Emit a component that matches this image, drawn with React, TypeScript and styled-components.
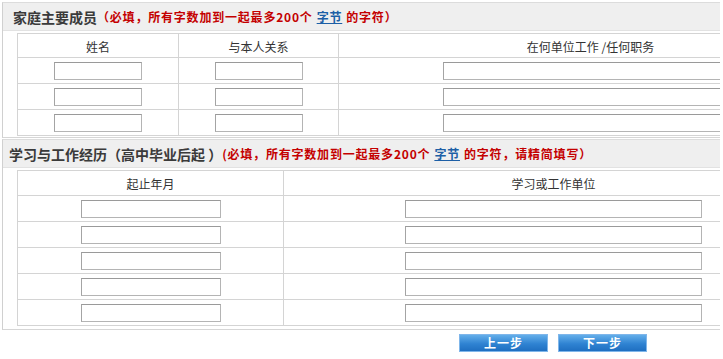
import styled, { createGlobalStyle } from 'styled-components';

const GlobalStyle = createGlobalStyle`
  html, body {
    margin: 0;
    padding: 0;
    background: #fff;
    overflow: hidden;
  }
  body {
    font-family: "Noto Sans CJK SC", "Noto Sans", "Liberation Sans", sans-serif;
    font-size: 12px;
    color: #333;
  }
`;

const Page = styled.div`
  width: 718px;
  margin-left: 2px;
  overflow: hidden;
`;

const Section = styled.div<{ $gap: number; $padBottom: number }>`
  border-top: 1px solid #dcdcdc;
  border-left: 1px solid #d0d0d0;
  border-bottom: 1px solid #d6d6d6;
  margin-top: ${(p) => p.$gap}px;
  padding-bottom: ${(p) => p.$padBottom}px;
`;

const SectionHeader = styled.div`
  height: 27px;
  background: #efefef;
  display: flex;
  align-items: center;
  padding-left: 6px;
  white-space: nowrap;
  border-bottom: 1px solid #e2e2e2;
`;

const Title = styled.span<{ $indent?: number }>`
  font-size: 14px;
  font-weight: bold;
  color: #3a3a3a;
  padding-left: ${(p) => p.$indent ?? 0}px;
`;

const Note = styled.span`
  font-size: 12px;
  font-weight: bold;
  letter-spacing: 0.8px;
  color: #c40000;
`;

const ByteLink = styled.a`
  color: #1d5fa6;
  text-decoration: underline;
  margin: 0 4px;
`;

const Content = styled.div`
  padding: 2px 0 0 14px;
`;

const Grid = styled.div<{ $width: number }>`
  width: ${(p) => p.$width}px;
  border-top: 1px solid #d4d4d4;
  border-left: 1px solid #d4d4d4;
`;

const Row = styled.div<{ $cols: string; $height: number }>`
  display: grid;
  grid-template-columns: ${(p) => p.$cols};
  height: ${(p) => p.$height}px;
`;

const Cell = styled.div`
  border-right: 1px solid #d4d4d4;
  border-bottom: 1px solid #d4d4d4;
  display: flex;
  align-items: center;
  justify-content: center;
  padding-top: 1px;
`;

const HeadCell = styled(Cell)`
  font-size: 12px;
  color: #333;
`;

const TextInput = styled.input<{ $width: number }>`
  box-sizing: border-box;
  width: ${(p) => p.$width}px;
  height: 18px;
  margin: 0;
  padding: 0 3px;
  border: 1px solid #b4b4b4;
  border-top-color: #9a9a9a;
  border-left-color: #a4a4a4;
  background: #fff;
  font-size: 12px;
  outline: none;
`;

const ButtonBar = styled.div`
  display: flex;
  gap: 10px;
  padding: 4px 0 0 457px;
`;

const StepButton = styled.button`
  width: 89px;
  height: 18px;
  padding: 0;
  border: 1px solid #7fb6ea;
  background: linear-gradient(#63aeea, #2f83d2 55%, #1f6fc1);
  color: #fff;
  font-family: inherit;
  font-size: 12px;
  font-weight: bold;
  letter-spacing: 1px;
  line-height: 16px;
  cursor: pointer;
`;

const familyCols = '161px 160px 504px';
const historyCols = '266px 540px';

export default function App() {
  return (
    <>
      <GlobalStyle />
      <Page>
        <Section $gap={2} $padBottom={1}>
          <SectionHeader>
            <Title $indent={4}>家庭主要成员</Title>
            <Note>
              （必填，所有字数加到一起最多200个
              <ByteLink href="#">字节</ByteLink>
              的字符）
            </Note>
          </SectionHeader>
          <Content>
            <Grid $width={826}>
              <Row $cols={familyCols} $height={24}>
                <HeadCell>姓名</HeadCell>
                <HeadCell>与本人关系</HeadCell>
                <HeadCell>在何单位工作 /任何职务</HeadCell>
              </Row>
              {[0, 1, 2].map((i) => (
                <Row key={i} $cols={familyCols} $height={26}>
                  <Cell>
                    <TextInput $width={88} />
                  </Cell>
                  <Cell>
                    <TextInput $width={88} />
                  </Cell>
                  <Cell>
                    <TextInput $width={295} />
                  </Cell>
                </Row>
              ))}
            </Grid>
          </Content>
        </Section>

        <Section $gap={1} $padBottom={3}>
          <SectionHeader>
            <Title>学习与工作经历（高中毕业后起 ）</Title>
            <Note>
              (必填，所有字数加到一起最多200个
              <ByteLink href="#">字节</ByteLink>
              的字符，请精简填写）
            </Note>
          </SectionHeader>
          <Content>
            <Grid $width={807}>
              <Row $cols={historyCols} $height={25}>
                <HeadCell>起止年月</HeadCell>
                <HeadCell>学习或工作单位</HeadCell>
              </Row>
              {[0, 1, 2, 3, 4].map((i) => (
                <Row key={i} $cols={historyCols} $height={26}>
                  <Cell>
                    <TextInput $width={140} />
                  </Cell>
                  <Cell>
                    <TextInput $width={297} />
                  </Cell>
                </Row>
              ))}
            </Grid>
          </Content>
        </Section>

        <ButtonBar>
          <StepButton>上一步</StepButton>
          <StepButton>下一步</StepButton>
        </ButtonBar>
      </Page>
    </>
  );
}
